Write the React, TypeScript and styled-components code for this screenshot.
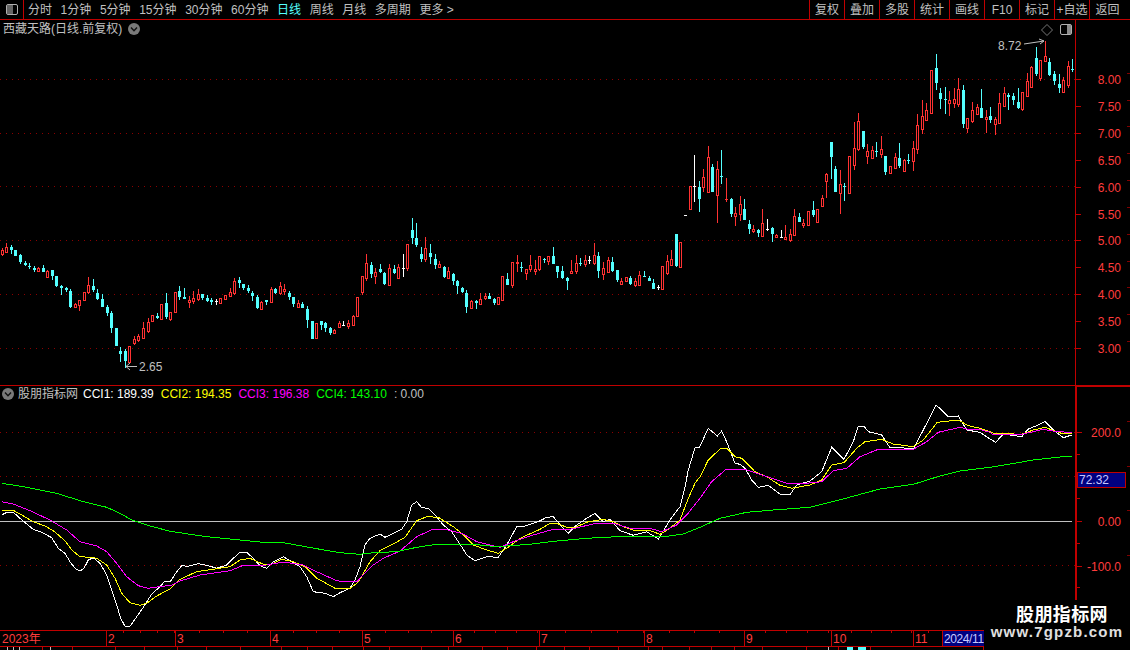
import React from 'react';
import styled, { createGlobalStyle } from 'styled-components';

const RED = '#c00000';
const AXIS_TEXT = '#ff3c3c';
const GREY = '#c0c0c0';
const FONT = '"Liberation Sans", "Noto Sans CJK SC", sans-serif';

const GlobalStyle = createGlobalStyle`
  html, body { margin: 0; background: #000; overflow: hidden; }
`;

const Page = styled.div`
  position: relative;
  width: 1130px;
  height: 650px;
  display: flex;
  flex-direction: column;
  background: #000;
  color: ${GREY};
  font: 12px/14px ${FONT};
  overflow: hidden;
`;

const TopBar = styled.div`
  display: flex;
  align-items: center;
  height: 19px;
  flex: none;
  border-bottom: 1px solid ${RED};
`;

const IconBox = styled.div`
  width: 23px;
  height: 19px;
  display: flex;
  align-items: center;
  justify-content: center;
  border-right: 1px solid ${RED};
  flex: none;
`;

const Periods = styled.div`
  display: flex;
  gap: 8.6px;
  margin-left: 4px;
  flex: 1;
`;

const Period = styled.span<{ $active?: boolean }>`
  color: ${p => (p.$active ? '#54ffff' : GREY)};
  white-space: nowrap;
`;

const Tools = styled.div`
  display: flex;
  height: 19px;
  margin-right: 5px;
  border-left: 1px solid ${RED};
`;

const Tool = styled.div`
  width: 34px;
  display: flex;
  align-items: center;
  justify-content: center;
  border-right: 1px solid ${RED};
  white-space: nowrap;
  &:last-child { border-right: none; width: 35px; }
`;

const Panel = styled.div<{ $height: number; $line?: boolean }>`
  display: flex;
  flex: none;
  height: ${p => p.$height}px;
  ${p => (p.$line ? `border-bottom: 1px solid ${RED};` : '')}
`;

const Plot = styled.div`
  position: relative;
  width: 1075px;
  flex: none;
`;

const PlotSvg = styled.svg`
  display: block;
`;

const Legend = styled.div<{ $top: number }>`
  position: absolute;
  top: ${p => p.$top}px;
  left: 2px;
  display: flex;
  align-items: center;
  white-space: nowrap;
`;

const ChevronDot = styled.svg`
  display: block;
  flex: none;
`;

const StockName = styled.span`
  margin: 0 6px 0 1px;
`;

const IndicatorName = styled.span`
  margin: 0 5px 0 4px;
`;

const Reading = styled.span<{ $color: string }>`
  color: ${p => p.$color};
  margin-right: 7px;
  white-space: pre;
`;

const PriceNote = styled.span<{ $left: number; $top: number }>`
  position: absolute;
  left: ${p => p.$left}px;
  top: ${p => p.$top}px;
  color: ${GREY};
`;

const Axis = styled.div<{ $pad: number; $thick?: boolean }>`
  position: relative;
  flex: 1;
  padding-top: ${p => p.$pad}px;
  border-left: ${p => (p.$thick ? 2 : 1)}px solid ${RED};
  ${p => (p.$thick ? `border-top: 1px solid ${RED};` : '')}
  box-sizing: border-box;
`;

const AxisRow = styled.div<{ $height: number }>`
  position: relative;
  box-sizing: border-box;
  height: ${p => p.$height}px;
  display: flex;
  align-items: center;
  justify-content: flex-end;
  padding: 2px 9px 0 0;
  color: ${AXIS_TEXT};
  &::before {
    content: '';
    position: absolute;
    left: 0;
    top: 50%;
    width: 5px;
    height: 1px;
    background: ${RED};
  }
  &::after {
    content: '';
    position: absolute;
    right: 0;
    top: 25%;
    width: 3px;
    height: 1px;
    background: #800000;
  }
`;

const MinorTick = styled.i`
  position: absolute;
  left: 0;
  bottom: 0;
  width: 3px;
  height: 1px;
  background: ${RED};
`;

const CursorTag = styled.div`
  position: absolute;
  left: 0;
  top: 85px;
  width: 46px;
  height: 14px;
  padding-left: 1px;
  background: #000080;
  border: 1px solid ${RED};
  color: #c8c8ff;
  line-height: 14px;
`;

const TimeAxis = styled.div`
  display: flex;
  height: 15px;
  flex: none;
  width: 984px;
  border-top: 1px solid ${RED};
  border-bottom: 1px solid ${RED};
`;

const Month = styled.div<{ $width: number; $step: number; $tag?: boolean }>`
  width: ${p => p.$width}px;
  flex: none;
  box-sizing: border-box;
  padding: 1px 0 0 1px;
  border-right: 1px solid ${RED};
  color: ${p => (p.$tag ? '#c8c8ff' : AXIS_TEXT)};
  background-color: ${p => (p.$tag ? '#000080' : 'transparent')};
  letter-spacing: ${p => (p.$tag ? '-0.4px' : '0')};
  ${p =>
    p.$step
      ? `background-image: repeating-linear-gradient(to right, transparent 0, transparent ${p.$step - 1}px, ${RED} ${p.$step - 1}px, ${RED} ${p.$step}px);
         background-size: 100% 2px;
         background-repeat: no-repeat;`
      : ''}
  &:first-child { padding-left: 2px; }
  &:last-child { border-right: none; }
  white-space: nowrap;
`;

const StatusBar = styled.div`
  display: flex;
  height: 3px;
  flex: none;
  overflow: hidden;
`;

const StatusCell = styled.div<{ $width: number; $pad: number }>`
  width: ${p => p.$width}px;
  flex: none;
  box-sizing: border-box;
  display: flex;
  gap: 5px;
  padding-left: ${p => p.$pad}px;
  border-right: 1px solid ${RED};
`;

const StatusMark = styled.i<{ $color: string; $width: number }>`
  width: ${p => p.$width}px;
  height: 3px;
  background: ${p => p.$color};
`;

const Watermark = styled.div`
  position: absolute;
  right: 0;
  bottom: 0;
  width: 146px;
  height: 50px;
  background: #000;
  display: flex;
  flex-direction: column;
  align-items: center;
  padding-top: 3px;
  box-sizing: border-box;
`;

const WatermarkTitle = styled.div`
  margin-left: 10px;
  color: #fff;
  font: 700 18px/20px "Noto Sans CJK SC", sans-serif;
  letter-spacing: 0.4px;
`;

const WatermarkUrl = styled.div`
  color: #e0e0e0;
  font: 700 15px/18px "Liberation Sans", sans-serif;
  letter-spacing: 1.2px;
  white-space: nowrap;
`;

type Row = [number, number, number, number, number, 'r' | 'c' | 'w'];

// rows: x, body top, body bottom, wick top, wick bottom, all read off 3x crops
const batches: { ox: number; oy: number; rows: Row[] }[] = [
  { ox: 0, oy: 230, rows: [
    [7,60,72,55,78,'r'],[19,51,65,40,66,'r'],[34,51,60,45,72,'c'],[46,60,78,60,78,'c'],[61,75,96,72,102,'c'],
    [76,98,105,93,108,'c'],[88,108,110,99,117,'c'],[103,113,121,108,126,'c'],[115,114,124,111,126,'r'],[130,114,126,105,126,'c'],
    [142,123,140,120,141,'r'],[157,120,138,120,150,'c'],[169,138,168,138,171,'c'],[184,168,174,165,195,'c'],[199,174,180,171,186,'c'],
    [211,183,231,177,234,'c'],[226,222,231,219,234,'r'],[238,210,225,210,243,'r'],[253,186,210,186,213,'r'],[265,165,186,141,192,'r'],
    [280,168,180,147,186,'c'],[292,189,207,177,210,'c'],[307,207,231,192,231,'c'],[322,231,249,225,258,'c'],[334,249,294,243,309,'c'],
    [349,294,348,294,348,'c'],[361,363,372,351,396,'c'],[376,363,393,357,414,'c'],[388,348,396,348,396,'r'],[403,327,339,318,345,'r'],
    [415,318,330,312,336,'r'],[430,294,324,276,327,'r'],[445,276,303,264,309,'r'],[457,255,273,255,276,'r'],[472,258,264,249,267,'c'],
    [484,222,267,222,270,'r'],[499,219,261,189,267,'c'],[511,246,267,246,273,'r'],[526,186,246,186,246,'r'],[538,183,201,168,210,'c'],
    [553,201,207,174,207,'c'],[568,210,216,198,234,'r'],[580,204,213,183,222,'r'],[595,192,207,177,213,'r'],[607,192,204,192,210,'c'],
    [622,204,213,195,216,'c'],[634,210,216,204,225,'c'],[649,213,213,207,225,'w'],[661,204,219,204,222,'r'],[676,195,207,195,207,'r'],
    [691,186,198,174,201,'r'],[703,153,189,144,195,'r'],[718,150,159,141,174,'c'],[730,162,174,162,180,'c'],[745,174,183,165,189,'c'],
  ] },
  { ox: 250, oy: 210, rows: [
    [7,249,258,243,273,'c'],[22,261,294,255,297,'c'],[34,276,297,273,297,'r'],[49,270,276,270,285,'c'],[64,237,276,231,276,'r'],
    [76,237,249,234,252,'c'],[91,228,249,216,255,'r'],[103,237,243,222,255,'r'],[118,249,261,243,270,'c'],[130,261,282,261,291,'c'],
    [145,279,291,270,294,'r'],[157,282,294,276,294,'c'],[172,297,330,288,354,'c'],[187,333,387,333,387,'c'],[199,339,384,339,384,'r'],
    [214,333,345,333,360,'c'],[226,339,354,336,366,'c'],[241,354,369,351,375,'c'],[253,360,369,357,369,'r'],[268,339,351,333,354,'r'],
    [280,345,345,333,348,'w'],[295,339,348,330,357,'r'],[310,318,345,315,345,'r'],[322,261,318,261,318,'r'],[337,198,246,198,255,'r'],
    [349,159,204,132,213,'r'],[364,165,192,156,204,'c'],[376,186,198,174,222,'r'],[391,177,186,162,189,'c'],[403,189,222,186,225,'c'],
    [418,174,225,162,225,'r'],[433,177,189,165,192,'c'],[445,171,204,162,204,'r'],[460,175,175,132,201,'w'],[472,102,174,102,183,'r'],
    [487,60,84,24,102,'c'],[499,84,105,39,111,'c'],[514,132,147,111,156,'c'],[526,114,147,81,156,'r'],[541,129,141,102,162,'c'],
    [556,147,165,132,177,'c'],[568,162,171,153,171,'r'],[583,171,201,168,204,'c'],[595,183,204,171,207,'r'],[610,192,213,189,225,'c'],
    [622,213,228,210,252,'c'],[637,234,246,231,249,'c'],[649,249,291,240,309,'c'],[664,273,294,270,294,'r'],[679,273,279,270,297,'c'],
    [691,267,282,249,285,'r'],[706,258,264,249,270,'r'],[718,258,267,249,267,'c'],[733,267,279,264,285,'c'],[745,261,282,261,282,'r'],
  ] },
  { ox: 490, oy: 140, rows: [
    [37,408,480,408,483,'r'],[52,417,435,399,435,'c'],[67,366,435,366,444,'r'],[82,366,369,345,396,'r'],[94,381,381,366,396,'c'],
    [109,388,399,388,420,'r'],[121,375,387,345,396,'r'],[136,387,393,360,405,'r'],[148,348,387,348,393,'r'],[163,357,357,354,369,'c'],
    [175,348,363,348,375,'r'],[190,348,372,321,372,'c'],[202,378,396,378,414,'c'],[217,393,414,378,417,'c'],[232,414,423,411,450,'c'],
    [244,393,399,360,399,'r'],[259,369,393,345,402,'r'],[271,369,369,354,378,'c'],[286,360,372,345,381,'r'],[298,360,360,348,372,'w'],
    [313,345,369,309,375,'r'],[325,348,393,336,414,'c'],[340,384,402,366,420,'r'],[355,360,396,351,399,'r'],[367,366,393,351,396,'c'],
    [382,390,420,390,426,'c'],[394,423,431,414,431,'r'],[409,411,423,411,426,'r'],[421,414,432,408,435,'c'],[436,423,435,414,441,'r'],
    [448,405,435,393,435,'r'],[463,408,408,393,411,'c'],[478,414,423,408,423,'c'],[490,429,447,417,447,'c'],[505,441,441,435,450,'w'],
    [517,378,447,378,447,'r'],[532,363,399,345,405,'r'],[544,357,375,330,375,'r'],[559,282,378,282,381,'c'],[571,306,381,306,381,'r'],
    [586,226,226,226,226,'w'],[601,138,207,138,207,'r'],[613,138,138,45,186,'w'],[628,141,177,123,216,'c'],[640,111,141,87,156,'r'],
    [655,51,156,18,156,'r'],[667,81,156,72,156,'c'],[682,87,165,63,249,'r'],[694,108,108,30,132,'c'],[709,177,177,114,186,'r'],
    [724,177,222,174,231,'c'],[736,219,228,201,258,'r'],[751,192,222,168,243,'r'],[763,207,240,177,240,'c'],[778,252,267,240,282,'c'],
    [790,267,273,255,279,'r'],[805,270,279,267,291,'c'],[817,249,288,207,288,'r'],[832,267,267,237,273,'w'],[847,264,282,261,306,'c'],
    [859,285,291,282,294,'r'],
  ] },
  { ox: 770, oy: 40, rows: [
    [34,591,591,570,594,'w'],[46,591,597,555,597,'r'],[61,582,600,567,606,'r'],[73,528,585,507,585,'r'],[88,531,546,519,546,'c'],
    [100,549,555,537,564,'r'],[115,513,555,513,555,'r'],[130,510,525,483,531,'c'],[142,507,546,507,549,'r'],[157,474,498,465,498,'r'],
    [169,402,423,399,474,'r'],[184,306,351,306,417,'c'],[196,387,456,378,456,'c'],[211,432,459,390,522,'r'],[223,438,438,429,483,'c'],
    [238,348,459,348,459,'r'],[253,324,375,246,390,'r'],[265,243,327,219,333,'r'],[280,273,321,273,327,'c'],[292,333,348,312,372,'r'],
    [307,330,354,318,357,'r'],[319,333,333,306,351,'c'],[334,327,342,288,354,'r'],[346,348,396,348,405,'c'],[361,378,399,378,399,'r'],
    [376,351,384,339,384,'r'],[388,354,378,309,384,'c'],[403,360,393,357,396,'r'],[415,360,360,342,372,'c'],[430,324,363,303,393,'r'],
    [442,255,327,222,342,'r'],[457,228,267,180,282,'r'],[469,210,240,189,243,'r'],[484,90,219,90,219,'r'],[499,84,129,42,150,'c'],
    [511,159,177,144,207,'c'],[526,177,177,141,222,'c'],[538,180,189,153,228,'r'],[553,177,189,144,204,'r'],[565,147,192,114,201,'r'],
    [580,150,252,135,264,'c'],[592,234,264,234,279,'r'],[607,210,243,186,249,'r'],[622,201,222,192,225,'r'],[634,204,234,147,234,'c'],
    [649,231,237,210,279,'r'],[661,228,240,201,249,'c'],[676,237,252,231,285,'r'],[688,189,249,159,249,'r'],[703,159,198,141,201,'r'],
    [715,165,171,159,210,'c'],[730,168,180,159,195,'c'],[745,186,204,144,207,'c'],[757,156,207,156,213,'r'],[772,123,168,99,168,'r'],
    [784,81,141,78,144,'r'],[799,54,102,21,108,'c'],[811,60,114,60,123,'r'],[826,48,63,3,66,'r'],[838,66,105,54,108,'c'],
    [853,102,123,93,135,'c'],[868,132,144,102,159,'c'],[880,120,156,111,159,'r'],[895,78,135,63,144,'r'],[907,87,90,57,96,'c'],
  ] },
];

const pts = (ox: number, oy: number, list: number[][]) =>
  list.map(([x, y]) => `${(ox + x / 3).toFixed(1)},${(oy + y / 3).toFixed(1)}`).join(' ');

const cciLines: { color: string; points: string }[] = [
  { color: '#ffffff', points: [
    pts(0, 470, [[5,135],[20,127],[40,127],[60,145],[80,162],[100,178],[125,187],[155,203],[175,235],[195,250],[210,275],[225,295],[240,303],[252,295],[265,270],[280,263],[300,280],[320,315],[335,360],[350,405],[362,445],[375,469],[390,469],[410,440],[430,412],[455,372],[480,350],[495,333],[512,333],[530,305],[545,287],[565,289],[595,281],[625,287],[650,295],[680,285],[700,265],[720,247],[740,247],[760,265],[780,287],[800,295],[820,275],[850,260],[875,275],[900,290],[920,320],[940,365],[975,370],[1000,380],[1020,368],[1050,355],[1065,330],[1080,290]]),
    pts(340, 470, [[75,225],[90,205],[120,192],[135,202],[185,178],[200,155],[215,105],[230,95],[245,113],[265,115],[285,135],[310,165],[335,185],[365,230],[380,255],[405,272],[440,260],[475,262],[500,225],[530,170],[550,170],[570,163],[595,155],[620,142],[640,140],[665,170],[685,190],[710,165],[740,145],[765,130],[790,155],[810,148],[840,182],[880,196],[920,185],[955,207],[990,150],[1020,110],[1035,50],[1045,0]]),
    pts(640, 400, [[165,143],[178,143],[205,85],[232,108],[245,93],[262,130],[285,190],[300,193],[315,205],[335,240],[355,262],[385,256],[420,282],[450,284],[470,255],[510,243],[545,215],[575,142],[612,178],[640,125],[655,78],[672,78],[685,95],[725,105],[750,143],[785,143],[820,147],[850,90],[888,15],[905,30],[925,50],[955,48],[980,90],[1020,97],[1050,117]]),
    pts(900, 380, [[287,187],[310,162],[365,170],[385,147],[410,137],[435,125],[460,150],[490,173],[515,165]]),
  ].join(' ') },
  { color: '#ffff00', points: [
    pts(0, 470, [[5,121],[40,121],[65,135],[100,155],[135,168],[160,182],[195,212],[215,240],[240,260],[270,262],[290,265],[320,285],[345,325],[365,370],[390,398],[420,406],[440,400],[470,378],[510,357],[540,328],[590,305],[650,296],[690,290],[720,270],[750,265],[790,283],[815,283],[845,268],[880,275],[915,290],[950,325],[975,338],[1005,355],[1050,355],[1070,340],[1080,328]]),
    pts(340, 470, [[90,275],[120,242],[160,222],[195,202],[230,152],[260,140],[295,142],[340,170],[365,190],[400,225],[440,240],[475,250],[510,228],[540,205],[600,178],[630,160],[650,160],[680,172],[705,172],[745,155],[790,148],[820,155],[850,170],[880,180],[925,180],[960,193],[985,178],[1020,150],[1045,85],[1065,40],[1080,20]]),
    pts(640, 400, [[205,180],[240,147],[260,145],[285,170],[305,175],[345,215],[380,230],[420,256],[455,265],[510,255],[545,240],[575,195],[612,188],[650,145],[675,125],[725,118],[760,132],[820,140],[850,120],[892,67],[955,60],[985,77],[1020,85],[1050,95]]),
    pts(900, 380, [[280,160],[365,163],[400,150],[435,142],[470,155],[490,162],[515,160]]),
  ].join(' ') },
  { color: '#ff00ff', points: [
    pts(0, 470, [[5,95],[40,102],[90,122],[150,150],[200,180],[240,215],[290,228],[320,245],[350,280],[380,320],[415,347],[445,355],[515,345],[540,333],[600,315],[650,308],[690,302],[730,286],[800,285],[850,276],[910,285],[950,305],[1010,332],[1040,336],[1070,335],[1080,325]]),
    pts(340, 470, [[100,285],[130,265],[180,243],[230,200],[280,177],[310,177],[365,190],[410,215],[450,225],[480,232],[520,215],[580,195],[640,178],[690,178],[760,162],[820,160],[870,175],[930,175],[965,185],[1010,165],[1040,135],[1080,85]]),
    pts(640, 400, [[215,245],[258,208],[315,208],[380,230],[440,250],[500,250],[545,245],[580,212],[620,205],[660,170],[715,148],[820,148],[860,125],[895,97],[960,82],[985,88],[1025,90],[1050,97]]),
    pts(900, 380, [[280,165],[365,163],[430,148],[470,155],[515,157]]),
  ].join(' ') },
  { color: '#00ff00', points: [
    pts(0, 470, [[5,40],[70,50],[170,70],[250,95],[320,112],[360,130],[395,150],[440,165],[510,184],[620,200],[700,208],[790,217],[850,218],[950,236],[1020,248],[1080,253]]),
    pts(340, 470, [[100,248],[170,245],[230,232],[290,223],[400,223],[470,230],[570,223],[640,214],[740,205],[830,200],[980,199],[1030,192],[1080,172]]),
    pts(640, 400, [[240,355],[320,337],[400,330],[510,322],[590,302],[720,267],[820,253],[900,228],[960,213],[1050,202]]),
    pts(900, 380, [[330,252],[400,240],[470,232],[515,228]]),
  ].join(' ') },
];

const Dotted = ({ y }: { y: number }) => (
  <line x1={0} x2={1075} y1={y + 0.5} y2={y + 0.5} stroke="#8c0000" strokeDasharray="1 5" />
);

const Candle = ({ row, ox, oy }: { row: Row; ox: number; oy: number }) => {
  const [x, top, bottom, hi, lo, kind] = row;
  const cx = Math.round(ox + x / 3);
  const yTop = Math.round(oy + top / 3);
  const yBottom = Math.round(oy + bottom / 3);
  const yHi = Math.round(oy + hi / 3);
  const yLo = Math.round(oy + lo / 3);
  const color = kind === 'r' ? '#ff3232' : kind === 'c' ? '#54ffff' : '#ffffff';
  const wick = <rect x={cx} y={yHi} width={1} height={Math.max(yLo - yHi, 1)} fill={color} />;
  if (kind === 'r' && yBottom - yTop > 0) {
    return (
      <g>
        {wick}
        <rect x={cx - 0.5} y={yTop + 0.5} width={2} height={yBottom - yTop} fill="#000" stroke={color} />
      </g>
    );
  }
  return (
    <g>
      {wick}
      <rect x={cx - 1} y={yTop} width={3} height={Math.max(yBottom - yTop, 1)} fill={color} />
    </g>
  );
};

const PanelIcon = ({ side }: { side: 'left' | 'right' }) => (
  <svg width={12} height={11} viewBox="0 0 12 11">
    <rect x={0.5} y={0.5} width={11} height={10} rx={1.5} fill="#000" stroke="#b0b0b0" />
    <rect x={side === 'left' ? 1 : 7} y={1} width={side === 'left' ? 6 : 4} height={9} fill={side === 'left' ? '#666' : '#8a8a8a'} />
  </svg>
);

const Chevron = () => (
  <ChevronDot width={12} height={12} viewBox="0 0 12 12">
    <circle cx={6} cy={6} r={6} fill="#7a7a7a" />
    <path d="M3 4.6 L6 7.8 L9 4.6" fill="none" stroke="#111" strokeWidth={1.4} />
  </ChevronDot>
);

const periods = ['分时', '1分钟', '5分钟', '15分钟', '30分钟', '60分钟', '日线', '周线', '月线', '多周期', '更多'];
const tools = ['复权', '叠加', '多股', '统计', '画线', 'F10', '标记', '+自选', '返回'];
const prices = ['8.00', '7.50', '7.00', '6.50', '6.00', '5.50', '5.00', '4.50', '4.00', '3.50', '3.00'];
const months = [
  { label: '2023年', width: 107, step: 0 },
  { label: '2', width: 69, step: 17 },
  { label: '3', width: 95, step: 24 },
  { label: '4', width: 92, step: 23 },
  { label: '5', width: 91, step: 23 },
  { label: '6', width: 86, step: 21 },
  { label: '7', width: 105, step: 26 },
  { label: '8', width: 100, step: 25 },
  { label: '9', width: 87, step: 21 },
  { label: '10', width: 82, step: 20 },
  { label: '11', width: 29, step: 15 },
];
const statusEdges = [43, 73, 116, 145, 178, 207, 241, 282, 308, 333, 364, 390, 422, 449, 483, 508, 537, 565, 590, 619, 649, 663, 690, 712, 735, 763, 807, 839, 871, 984];

export default function App() {
  return (
    <Page>
      <GlobalStyle />
      <TopBar>
        <IconBox><PanelIcon side="left" /></IconBox>
        <Periods>
          {periods.map(p => (
            <Period key={p} $active={p === '日线'}>{p === '更多' ? '更多 >' : p}</Period>
          ))}
        </Periods>
        <Tools>
          {tools.map(t => <Tool key={t}>{t}</Tool>)}
        </Tools>
      </TopBar>

      <Panel $height={365} $line>
        <Plot>
          <PlotSvg width={1075} height={365} viewBox="0 20 1075 365">
            <g shapeRendering="crispEdges">
              {[79, 133, 186, 240, 294, 348].map(y => <Dotted key={y} y={y} />)}
              {batches.map(b => b.rows.map(r => <Candle key={`${b.ox}-${r[0]}`} row={r} ox={b.ox} oy={b.oy} />))}
            </g>
            <path d="M1024 44 L1044 41 M1039 39 L1044 41 L1040 44" fill="none" stroke={GREY} />
            <path d="M137 366.5 L126 366.5 M130 363 L126 366.5 L130 370" fill="none" stroke={GREY} />
            <path d="M1047 24.5 L1052.5 30 L1047 35.5 L1041.5 30 Z" fill="none" stroke="#777" />
            <g transform="translate(1060 24)"><PanelIcon side="right" /></g>
          </PlotSvg>
          <Legend $top={2}>
            <StockName>西藏天路(日线.前复权)</StockName>
            <Chevron />
          </Legend>
          <PriceNote $left={998} $top={19}>8.72</PriceNote>
          <PriceNote $left={139} $top={340}>2.65</PriceNote>
        </Plot>
        <Axis $pad={46}>
          {prices.map(p => <AxisRow key={p} $height={26.85}>{p}</AxisRow>)}
        </Axis>
      </Panel>

      <Panel $height={244}>
        <Plot>
          <PlotSvg width={1075} height={244} viewBox="0 386 1075 244">
            <g shapeRendering="crispEdges">
              <Dotted y={432} />
              <Dotted y={476} />
              <Dotted y={565} />
              <line x1={0} x2={1072} y1={521.5} y2={521.5} stroke={GREY} />
              {cciLines.map(l => (
                <polyline key={l.color} points={l.points} fill="none" stroke={l.color} />
              ))}
            </g>
          </PlotSvg>
          <Legend $top={1}>
            <Chevron />
            <IndicatorName>股朋指标网</IndicatorName>
            <Reading $color="#ffffff">CCI1: 189.39</Reading>
            <Reading $color="#ffff00">CCI2: 194.35</Reading>
            <Reading $color="#ff00ff">CCI3: 196.38</Reading>
            <Reading $color="#00ff00">CCI4: 143.10</Reading>
            <Reading $color={GREY}>: 0.00</Reading>
          </Legend>
        </Plot>
        <Axis $pad={23} $thick>
          {['200.0', '', '0.00', '-100.0'].map(v => (
            <AxisRow key={v} $height={44.5}>{v}<MinorTick /></AxisRow>
          ))}
          <CursorTag>72.32</CursorTag>
        </Axis>
      </Panel>

      <TimeAxis>
        {months.map(m => (
          <Month key={m.label} $width={m.width} $step={m.step}>{m.label}</Month>
        ))}
        <Month $width={42} $step={0} $tag>2024/11</Month>
      </TimeAxis>

      <StatusBar>
        {statusEdges.map((edge, i) => (
          <StatusCell
            key={edge}
            $width={edge - (i ? statusEdges[i - 1] : 0)}
            $pad={i === 27 ? 21 : i === 28 ? 8 : 7}
          >
            {i === 0 && (
              <>
                <StatusMark $color={GREY} $width={1} />
                <StatusMark $color={GREY} $width={1} />
                <StatusMark $color={GREY} $width={1} />
              </>
            )}
            {i === 1 && <StatusMark $color={GREY} $width={1} />}
            {i === 27 && <StatusMark $color={GREY} $width={1} />}
            {i === 28 && (
              <>
                <StatusMark $color="#54ffff" $width={6} />
                <StatusMark $color="#54ffff" $width={8} />
              </>
            )}
          </StatusCell>
        ))}
      </StatusBar>

      <Watermark>
        <WatermarkTitle>股朋指标网</WatermarkTitle>
        <WatermarkUrl>www.7gpzb.com</WatermarkUrl>
      </Watermark>
    </Page>
  );
}
